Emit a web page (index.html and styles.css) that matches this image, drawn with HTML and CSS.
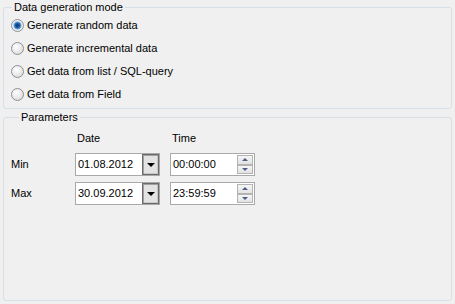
FILE: index.html
```html
<!DOCTYPE html>
<html>
<head>
<meta charset="utf-8">
<link rel="stylesheet" href="styles.css">
</head>
<body>
<fieldset class="group mode">
  <legend class="caption">Data generation mode</legend>
  <label class="radio-row"><span class="radio checked"></span><span>Generate random data</span></label>
  <label class="radio-row"><span class="radio"></span><span>Generate incremental data</span></label>
  <label class="radio-row"><span class="radio"></span><span>Get data from list / SQL-query</span></label>
  <label class="radio-row"><span class="radio"></span><span>Get data from Field</span></label>
</fieldset>
<fieldset class="group params">
  <legend class="caption">Parameters</legend>
  <div class="grid">
    <div></div>
    <div class="head">Date</div>
    <div class="head">Time</div>

    <div class="label">Min</div>
    <div class="box">
      <span class="value">01.08.2012</span>
      <span class="drop"><span class="tri"></span></span>
    </div>
    <div class="box">
      <span class="value">00:00:00</span>
      <span class="spin"><span class="sb up"><span class="a-up"></span></span><span class="sb dn"><span class="a-dn"></span></span></span>
    </div>

    <div class="label">Max</div>
    <div class="box">
      <span class="value">30.09.2012</span>
      <span class="drop"><span class="tri"></span></span>
    </div>
    <div class="box">
      <span class="value">23:59:59</span>
      <span class="spin"><span class="sb up"><span class="a-up"></span></span><span class="sb dn"><span class="a-dn"></span></span></span>
    </div>
  </div>
</fieldset>
</body>
</html>
```
FILE: styles.css
```css
html, body {
  margin: 0;
  background: #f0f0f0;
}
body {
  width: 455px;
  height: 304px;
  box-sizing: border-box;
  padding: 1px 3px 3px 3px;
  display: flex;
  flex-direction: column;
  font-family: "Liberation Sans", Arial, sans-serif;
  font-size: 11px;
  line-height: 13px;
  color: #000;
  overflow: hidden;
}
.group {
  margin: 0;
  padding: 0;
  border: 1px solid #d5dfe5;
  border-radius: 3px;
  min-width: 0;
}
.caption {
  margin-left: 8px;
  padding: 0 2px;
  line-height: 13px;
  color: #000;
}
.mode {
  padding-bottom: 2px;
}
.radio-row {
  display: flex;
  align-items: center;
  height: 23px;
  padding-left: 7px;
}
.radio {
  width: 13px;
  height: 13px;
  box-sizing: border-box;
  border-radius: 50%;
  border: 1px solid #8f9194;
  background: radial-gradient(circle at 40% 35%, #ffffff 0%, #ececec 45%, #cfd0d1 100%);
  margin-right: 3px;
  flex: none;
}
.radio.checked {
  background: radial-gradient(circle at 50% 50%, #0d2f66 0, #1f5ea6 2.2px, #6aa6dc 3.6px, #c9dff2 4.2px, #f2f2f2 4.8px, #d7d8d9 100%);
}
.params {
  margin-top: 2px;
  flex: 1;
  padding: 8px 0 0 7px;
}
.grid {
  display: grid;
  grid-template-columns: 54px 85px 85px;
  grid-template-rows: 15px 23px 23px;
  column-gap: 10px;
  row-gap: 6px;
}
.head {
  padding-left: 2px;
}
.label {
  display: flex;
  align-items: center;
}
.box {
  display: flex;
  align-items: stretch;
  box-sizing: border-box;
  height: 23px;
  border: 1px solid #a9a9a9;
  background: #fff;
}
.value {
  flex: 1;
  display: flex;
  align-items: center;
  padding-left: 2px;
}
.drop {
  width: 17px;
  box-sizing: border-box;
  border: 1px solid #6b6b6b;
  box-shadow: inset 1px 1px 0 #a0a0a0, inset -1px -1px 0 #c8c8c8;
  background: #e3e3e3;
  display: flex;
  align-items: center;
  justify-content: center;
}
.tri {
  width: 0;
  height: 0;
  border-left: 4px solid transparent;
  border-right: 4px solid transparent;
  border-top: 4px solid #000;
  margin-top: 1px;
}
.spin {
  display: flex;
  flex-direction: column;
  padding: 1px 1px 1px 0;
}
.sb {
  width: 16px;
  height: 10px;
  box-sizing: border-box;
  border: 1px solid #b4b4b4;
  background: linear-gradient(#f6f6f6, #e2e2e2);
  display: flex;
  align-items: center;
  justify-content: center;
}
.a-up {
  width: 0;
  height: 0;
  border-left: 3px solid transparent;
  border-right: 3px solid transparent;
  border-bottom: 3px solid #4a5f86;
}
.a-dn {
  width: 0;
  height: 0;
  border-left: 3px solid transparent;
  border-right: 3px solid transparent;
  border-top: 3px solid #4a5f86;
}
```
